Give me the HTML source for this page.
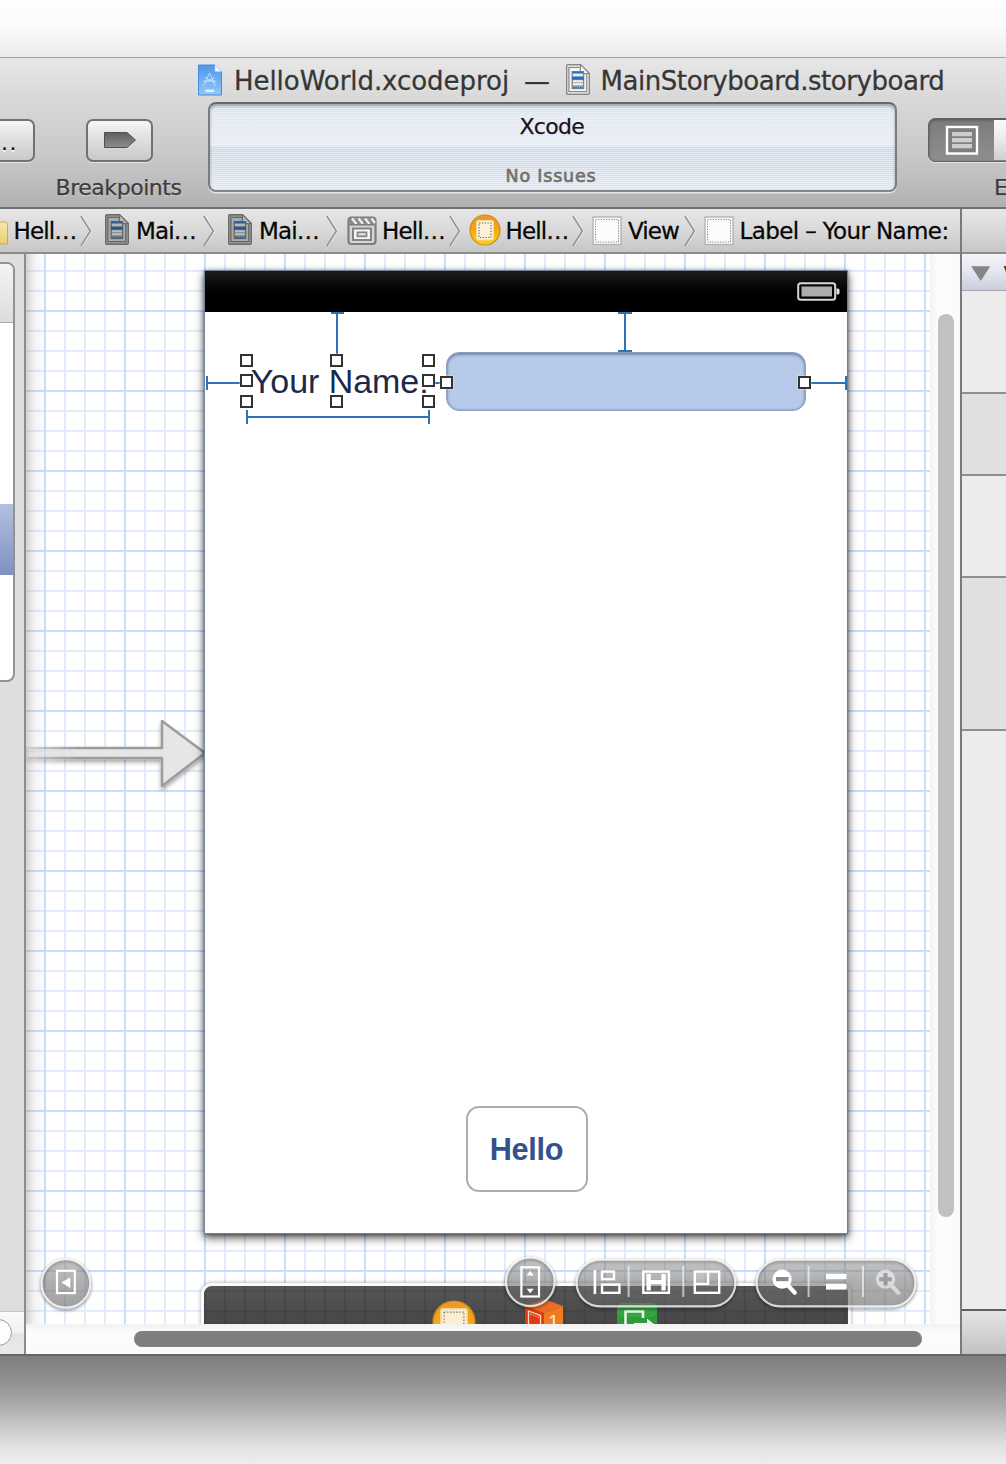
<!DOCTYPE html>
<html>
<head>
<meta charset="utf-8">
<title>Xcode</title>
<style>
html,body{margin:0;padding:0;}
body{width:1006px;height:1464px;position:relative;overflow:hidden;background:#fff;font-family:"DejaVu Sans","Liberation Sans",sans-serif;}
.abs{position:absolute;}
#topbg{left:0;top:0;width:1006px;height:57px;background:linear-gradient(#fefefe 0%,#fbfbfb 45%,#ececec 100%);}
#chrome{left:0;top:57px;width:1006px;height:150px;background:linear-gradient(#e7e7e7 0%,#d8d8d8 28%,#cacaca 62%,#bcbcbc 85%,#b0b0b0 100%);border-top:1px solid #a3a3a3;box-sizing:border-box;}
#chromeline{left:0;top:207px;width:1006px;height:2.500px;background:#707070;}
#crumbs{left:0;top:209px;width:1006px;height:43px;background:linear-gradient(#e6e6e6 0%,#d9d9d9 50%,#c6c6c6 100%);}
#crumbline{left:0;top:252px;width:1006px;height:2px;background:#8c8c8c;}
.tt{position:absolute;white-space:nowrap;line-height:1;}
.title{font-size:26px;color:#363636;-webkit-text-stroke:.3px #363636;text-shadow:0 1px 0 rgba(255,255,255,.6);}
.lbl{font-size:22px;color:#3c3c3c;-webkit-text-stroke:.25px #3c3c3c;text-shadow:0 1px 0 rgba(255,255,255,.55);}
.crumb{letter-spacing:-.9px;font-size:23px;color:#050505;-webkit-text-stroke:.3px #050505;text-shadow:0 1px 0 rgba(255,255,255,.6);}
.tbtn{position:absolute;box-sizing:border-box;border:2px solid #717171;border-radius:7px;background:linear-gradient(#f6f6f6 0%,#e9e9e9 25%,#dadada 60%,#c9c9c9 100%);box-shadow:0 1px 0 rgba(255,255,255,.55);}
#activity{left:208px;top:102px;width:689px;height:90px;box-sizing:border-box;border:2px solid #7c7c7c;border-top-color:#676767;border-bottom-color:#858585;border-radius:8px;background:repeating-linear-gradient(rgba(255,255,255,.38) 0 1px,rgba(255,255,255,0) 1px 2px),linear-gradient(#d6e0ed 0%,#dfe8f3 14%,#e3ebf5 48%,#d0dbea 50%,#d4dfec 75%,#dfe8f4 100%);box-shadow:0 1.500px 0 rgba(255,255,255,.65), inset 0 2px 3px rgba(50,60,80,.4);}
#leftpanel{left:0;top:254px;width:24px;height:1101px;background:#dedede;}
#leftdiv{left:24px;top:254px;width:2px;height:1101px;background:#8c8c8c;}
#canvas{left:26px;top:254px;width:904px;height:1070px;overflow:hidden;background-color:#fff;
background-image:
linear-gradient(90deg,rgba(120,120,120,.32) 0,rgba(160,160,160,.14) 8px,rgba(255,255,255,0) 20px),
linear-gradient(90deg,#c6daf7 0 1px,#cfe0f8 1px 2px,transparent 2px),
linear-gradient(#c6daf7 0 1px,#cfe0f8 1px 2px,transparent 2px),
linear-gradient(90deg,#dde9fa 0 1px,#e6effc 1px 2px,transparent 2px),
linear-gradient(#dde9fa 0 1px,#e6effc 1px 2px,transparent 2px);
background-size:100% 100%,80px 80px,80px 80px,20px 20px,20px 20px;
background-position:0 0,18px 0,0 56px,18px 0,0 16px;
background-repeat:no-repeat,repeat,repeat,repeat,repeat;}
#vtrack{left:930px;top:254px;width:30px;height:1070px;background:linear-gradient(90deg,#f3f3f3,#fdfdfd 30%,#fafafa);}
#vthumb{left:938px;top:314px;width:16px;height:903px;border-radius:8px;background:#c1c1c1;}
#htrack{left:26px;top:1324px;width:934px;height:31px;background:linear-gradient(#f1f1f1,#fdfdfd 30%,#fafafa);}
#hthumb{left:134px;top:1331px;width:788px;height:16px;border-radius:8px;background:#7f7f7f;}
#inspdiv{left:960px;top:209px;width:2px;height:1146px;background:#7a7a7a;}
#insp{left:962px;top:254px;width:44px;height:1101px;background:#ececec;}
#winbottom{left:0;top:1354px;width:1006px;height:2px;background:#666;}
#botshadow{left:0;top:1356px;width:1006px;height:108px;background:linear-gradient(#7e7e7e 0%,#858585 10%,#929292 25%,#aaaaaa 45%,#c8c8c8 65%,#e2e2e2 85%,#eeeeee 100%);}
#view{left:204.300px;top:270.300px;width:643.400px;height:963.300px;background:#fff;box-shadow:0 4px 9px rgba(0,0,0,.62),0 1px 4px rgba(0,0,0,.42);}
#viewborder{left:0;top:0;width:643.400px;height:963.300px;box-sizing:border-box;border:1.700px solid #74829a;border-right-color:#7d7d7d;border-bottom-color:#7d7d7d;}
#statusbar{left:.700px;top:.700px;width:642px;height:41px;background:linear-gradient(#1c1c1c 0,#111 8px,#000 22px,#000 100%);}
.h{position:absolute;width:13px;height:13px;box-sizing:border-box;border:2px solid #333;background:#fff;box-shadow:0 0 0 .5px rgba(255,255,255,.6);}
.bl{position:absolute;background:#2e73b8;}
.pill{position:absolute;box-sizing:border-box;height:50px;border-radius:25px;background:rgba(108,108,108,.56);border:2px solid rgba(255,255,255,.62);box-shadow:0 1px 4px rgba(0,0,0,.35);}
</style>
</head>
<body>
<div id="topbg" class="abs"></div>
<div id="chrome" class="abs"></div>
<div id="chromeline" class="abs"></div>
<div id="crumbs" class="abs"></div>
<div id="crumbline" class="abs"></div>

<!-- TITLE -->
<div id="titlebar">
<span class="tt title" style="left:234px;top:67.500px;letter-spacing:-.05px">HelloWorld.xcodeproj</span>
<span class="tt title" style="left:524px;top:67.500px">—</span>
<span class="tt title" style="left:600.500px;top:67.500px;letter-spacing:-.44px">MainStoryboard.storyboard</span>
</div>

<!-- TOOLBAR -->
<div id="toolbar">
<div class="tbtn" style="left:-10px;top:118.500px;width:45px;height:43px"></div>
<span class="tt" style="left:-7.400px;top:132.200px;font-size:22px;color:#0a0a0a;letter-spacing:1.500px;text-shadow:0 1.500px 0 rgba(255,255,255,.8)">...</span>
<div class="tbtn" style="left:86px;top:118.500px;width:67px;height:43px"></div>
<span class="tt lbl" style="left:55.500px;top:177.200px;letter-spacing:-.45px">Breakpoints</span>
<div id="activity" class="abs"></div>
<span class="tt" style="left:519.500px;top:116px;font-size:22px;color:#1c1020;letter-spacing:-.7px;-webkit-text-stroke:.25px #1c1020">Xcode</span>
<span class="tt" style="left:505.500px;top:168px;font-size:17.500px;color:#717171;letter-spacing:.8px;-webkit-text-stroke:.7px #717171;text-shadow:0 1px 0 rgba(255,255,255,.7)">No Issues</span>
<span class="tt lbl" style="left:994px;top:177.200px">Editor</span>
</div>


<!-- toolbar icons -->
<svg class="abs" style="left:100px;top:128px" width="40" height="24" viewBox="0 0 40 24">
<defs><linearGradient id="bpg" x1="0" y1="0" x2="0" y2="1"><stop offset="0" stop-color="#5f5f5f"/><stop offset="1" stop-color="#8d8d8d"/></linearGradient></defs>
<path d="M4.5 4.5 H27 L35.5 12 L27 19.500 H4.5 Z" fill="url(#bpg)" stroke="#505050" stroke-width="1"/>
</svg>
<div class="abs" style="left:928px;top:118px;width:90px;height:44px;box-sizing:border-box;border:1.5px solid #636363;border-radius:7px;background:linear-gradient(#7b7b7b 0%,#858585 50%,#8f8f8f 100%);box-shadow:0 1px 0 rgba(255,255,255,.5), inset 0 1px 3px rgba(0,0,0,.35);"></div>
<div class="abs" style="left:994px;top:120px;width:20px;height:40px;background:linear-gradient(#fbfbfb 0%,#e9e9e9 50%,#cfcfcf 100%);"></div>
<svg class="abs" style="left:944px;top:124px" width="36" height="32" viewBox="0 0 36 32">
<rect x="3" y="3" width="30" height="26.5" fill="#7e7e7e" stroke="#fff" stroke-width="2.4"/>
<rect x="8" y="8" width="20" height="4.3" fill="#cdcdcd"/>
<rect x="8" y="14" width="20" height="4.3" fill="#cdcdcd"/>
<rect x="8" y="20" width="20" height="4.3" fill="#cdcdcd"/>
</svg>
<!-- title icons -->
<svg class="abs" style="left:197px;top:63.500px" width="26" height="32" viewBox="0 0 26 32">
<defs><linearGradient id="xpg" x1="0" y1="0" x2="0" y2="1"><stop offset="0" stop-color="#4f97ec"/><stop offset="1" stop-color="#93c7f8"/></linearGradient></defs>
<path d="M1.500 1 H18 L24.500 7.500 V31 H1.500 Z" fill="url(#xpg)" stroke="#4a8ade" stroke-width="1"/>
<path d="M18 1 V7.500 H24.500 Z" fill="#fbfdff" stroke="#a9c9ee" stroke-width=".6"/>
<path d="M12.500 9 L6.500 22 M12.500 9 L18.500 22 M6 17 H19.500 M8 13.500 L18 19 M17.500 13.500 L7.500 19" stroke="#d6e8fc" stroke-width="1" fill="none" opacity=".75"/>
<rect x="8.500" y="25.500" width="8.500" height="2.600" fill="#eaf3fe" opacity=".9"/>
</svg>
<svg class="abs" style="left:566px;top:64px" width="24" height="31"><use href="#sbdocw"/></svg>

<!-- BREADCRUMBS -->

<svg width="0" height="0" style="position:absolute">
<defs>
<linearGradient id="fold" x1="0" y1="0" x2="0" y2="1"><stop offset="0" stop-color="#f8e9a8"/><stop offset="1" stop-color="#e9cf6e"/></linearGradient>
<linearGradient id="org" x1="0" y1="0" x2="0" y2="1"><stop offset="0" stop-color="#ee962f"/><stop offset=".45" stop-color="#f4a313"/><stop offset=".72" stop-color="#f8c000"/><stop offset="1" stop-color="#f6cf2a"/></linearGradient>
<symbol id="chev" viewBox="0 0 14 34"><path d="M2 2 L11.500 17 L2 32" fill="none" stroke="#8d8d8d" stroke-width="1.600"/><path d="M3.200 2 L12.700 17 L3.200 32" fill="none" stroke="#f4f4f4" stroke-width="1" opacity=".7"/></symbol>
<symbol id="sbdoc" viewBox="0 0 24 31">
<path d="M2 .7 H14.500 L23.300 9.500 V29 Q23.300 30.300 22 30.300 H2 Q.700 30.300 .700 29 V2 Q.700 .700 2 .700 Z" fill="#9c9c9c" stroke="#6b6b6b" stroke-width="1.400"/>
<path d="M2.900 3.300 H14.500 V9.500 H20.800 V27.600 H2.900 Z" fill="#ababab" stroke="#686868" stroke-width="1.300"/>
<path d="M14.500 .7 V8 Q14.500 9.500 16 9.500 H23.300 Z" fill="#bababa" stroke="#6b6b6b" stroke-width="1.100" stroke-linejoin="round"/>
<rect x="6.100" y="7.500" width="11.600" height="17.100" fill="#8c8c8c" stroke="#5c5c5c" stroke-width="1"/>
<rect x="6.600" y="7.900" width="10.600" height="1.300" fill="#2f5f96"/>
<rect x="7" y="10.100" width="9.800" height="1.800" fill="#bcbcbc"/>
<rect x="5.800" y="12.700" width="12.300" height="3" rx="1.200" fill="#1b5c9d"/>
<rect x="7" y="16.300" width="9.800" height="1.800" fill="#bcbcbc"/>
<rect x="7" y="19.200" width="9.800" height="1.900" fill="#bcbcbc"/>
<path d="M7 23.300 H17" stroke="#2f5f96" stroke-width="1.700" stroke-dasharray="1.600 .700"/>
</symbol>
<symbol id="sbdocw" viewBox="0 0 24 31">
<path d="M2 .7 H14.500 L23.300 9.500 V29 Q23.300 30.300 22 30.300 H2 Q.700 30.300 .700 29 V2 Q.700 .700 2 .700 Z" fill="#fbfbfb" stroke="#868686" stroke-width="1.400"/>
<path d="M2.900 3.300 H14.500 V9.500 H20.800 V27.600 H2.900 Z" fill="#f4f4f4" stroke="#8a8a8a" stroke-width="1.300"/>
<path d="M14.500 .7 V8 Q14.500 9.500 16 9.500 H23.300 Z" fill="#ffffff" stroke="#868686" stroke-width="1.100" stroke-linejoin="round"/>
<rect x="6.100" y="7.500" width="11.600" height="17.100" fill="#b0b0b0" stroke="#7a7a7a" stroke-width="1"/>
<rect x="6.600" y="7.900" width="10.600" height="1.300" fill="#2f6fc0"/>
<rect x="7" y="10.100" width="9.800" height="1.800" fill="#f3f3f3"/>
<rect x="5.800" y="12.700" width="12.300" height="3" rx="1.200" fill="#1a6fd0"/>
<rect x="7" y="16.300" width="9.800" height="1.800" fill="#f3f3f3"/>
<rect x="7" y="19.200" width="9.800" height="1.900" fill="#f3f3f3"/>
<path d="M7 23.300 H17" stroke="#2f6fc0" stroke-width="1.700" stroke-dasharray="1.600 .700"/>
</symbol>
<symbol id="scene" viewBox="0 0 30 30">
<rect x="1.500" y="1.500" width="27" height="26.500" rx="3" fill="#d6d6d6" stroke="#7e7e7e" stroke-width="2.200"/>
<rect x="2.500" y="2.500" width="25" height="5.500" fill="#8a8a8a"/>
<path d="M5 2.500 L9.500 8 M11.500 2.500 L16 8 M18 2.500 L22.500 8 M24.500 2.500 L28 7" stroke="#f0f0f0" stroke-width="2.300"/>
<rect x="2.500" y="8" width="25" height="1.600" fill="#7e7e7e"/>
<rect x="6" y="12.500" width="18" height="11.500" fill="#f4f4f4" stroke="#848484" stroke-width="2"/>
<rect x="10.500" y="16.300" width="9" height="4" fill="#e2e2e2" stroke="#848484" stroke-width="1.700"/>
</symbol>
<symbol id="vc" viewBox="0 0 32 32">
<circle cx="16" cy="16" r="15" fill="url(#org)" stroke="#d18a12" stroke-width="1.200"/>
<rect x="7.500" y="6.500" width="17" height="19.500" rx="2" fill="#fcf0d8" stroke="#f3d9a6" stroke-width="1"/>
<rect x="10" y="9" width="12" height="14.500" fill="none" stroke="#6f6048" stroke-width="1.100" stroke-dasharray="1.300 1.500"/>
</symbol>
<symbol id="vw" viewBox="0 0 30 30">
<rect x="1" y="1" width="28" height="27.500" fill="#fbfbfb" stroke="#b4b4b4" stroke-width="1.400"/>
<rect x="3.500" y="3.500" width="23" height="22.500" fill="none" stroke="#8a8a8a" stroke-width="1" stroke-dasharray="1.300 1.300"/>
</symbol>
</defs>
</svg>
<div id="crumbbar">
<svg class="abs" style="left:-11px;top:218.5px" width="20" height="26" viewBox="0 0 20 26"><path d="M0 3 H16 Q18.500 3 18.500 5.500 V25 H0 Z" fill="url(#fold)" stroke="#c8ac52" stroke-width="1"/></svg>
<svg class="abs" style="left:79px;top:213.5px" width="14" height="34"><use href="#chev"/></svg>
<svg class="abs" style="left:105px;top:214px" width="24" height="31"><use href="#sbdoc"/></svg>
<svg class="abs" style="left:202px;top:213.5px" width="14" height="34"><use href="#chev"/></svg>
<svg class="abs" style="left:228px;top:214px" width="24" height="31"><use href="#sbdoc"/></svg>
<svg class="abs" style="left:325px;top:213.5px" width="14" height="34"><use href="#chev"/></svg>
<svg class="abs" style="left:347px;top:215.5px" width="30" height="30"><use href="#scene"/></svg>
<svg class="abs" style="left:448px;top:213.5px" width="14" height="34"><use href="#chev"/></svg>
<svg class="abs" style="left:469px;top:213.5px" width="32" height="32"><use href="#vc"/></svg>
<svg class="abs" style="left:571px;top:213.5px" width="14" height="34"><use href="#chev"/></svg>
<svg class="abs" style="left:592px;top:215.5px" width="30" height="30"><use href="#vw"/></svg>
<svg class="abs" style="left:683px;top:213.5px" width="14" height="34"><use href="#chev"/></svg>
<svg class="abs" style="left:704px;top:215.5px" width="30" height="30"><use href="#vw"/></svg>

<span class="tt crumb" style="left:13.500px;top:220.200px">Hell…</span>
<span class="tt crumb" style="left:136px;top:220.200px">Mai…</span>
<span class="tt crumb" style="left:259px;top:220.200px">Mai…</span>
<span class="tt crumb" style="left:382px;top:220.200px">Hell…</span>
<span class="tt crumb" style="left:505.500px;top:220.200px">Hell…</span>
<span class="tt crumb" style="left:628px;top:220.200px">View</span>
<span class="tt crumb" style="left:739.500px;top:220.200px;letter-spacing:-.62px">Label – Your Name:</span>
</div>

<div id="leftpanel" class="abs"></div>
<div id="leftdiv" class="abs"></div>
<div id="canvas" class="abs"></div>
<div id="vtrack" class="abs"></div>
<div id="htrack" class="abs"></div>
<div id="insp" class="abs"></div>
<div id="inspdiv" class="abs"></div>


<!-- entry arrow -->
<svg class="abs" style="left:26px;top:707.500px" width="190" height="96" viewBox="0 0 190 96">
<defs>
<linearGradient id="arf" x1="0" y1="0" x2="1" y2="0"><stop offset="0" stop-color="#e6e6e6" stop-opacity=".25"/><stop offset=".12" stop-color="#e6e6e6" stop-opacity=".6"/><stop offset=".3" stop-color="#e6e6e6" stop-opacity="1"/></linearGradient>
<linearGradient id="ars" x1="0" y1="0" x2="1" y2="0"><stop offset="0" stop-color="#9c9c9c" stop-opacity=".25"/><stop offset=".12" stop-color="#9c9c9c" stop-opacity=".6"/><stop offset=".3" stop-color="#9c9c9c" stop-opacity="1"/></linearGradient>
<filter id="ash" x="-10%" y="-20%" width="130%" height="150%"><feGaussianBlur in="SourceAlpha" stdDeviation="2"/><feOffset dy="3"/><feComponentTransfer><feFuncA type="linear" slope=".35"/></feComponentTransfer><feMerge><feMergeNode/><feMergeNode in="SourceGraphic"/></feMerge></filter>
</defs>
<path d="M0 40 H136 V13 L179 45 L136 78 V50 H0 Z" fill="url(#arf)" stroke="url(#ars)" stroke-width="2.500" stroke-linejoin="round" filter="url(#ash)"/>
</svg>
<!-- left panel box -->
<div class="abs" style="left:-20px;top:262px;width:35px;height:420px;box-sizing:border-box;border:2px solid #939393;border-radius:8px;background:#fff;overflow:hidden">
  <div class="abs" style="left:0;top:0;width:40px;height:58px;background:linear-gradient(#f4f4f4,#dcdcdc);border-bottom:1.500px solid #a9a9a9"></div>
  <div class="abs" style="left:0;top:240px;width:40px;height:71px;background:linear-gradient(#b4c0e2,#7e91bf)"></div>
</div>
<div class="abs" style="left:0;top:1311px;width:24px;height:43px;background:linear-gradient(#fbfbfb,#f0f0f0 50%,#e4e4e4 52%,#e9e9e9);border-top:1px solid #c4c4c4;box-sizing:border-box"></div>
<div class="abs" style="left:-15px;top:1319px;width:27px;height:27px;box-sizing:border-box;border-radius:50%;border:1.500px solid #9b9b9b;background:#fdfdfd"></div>
<!-- inspector header -->
<div class="abs" style="left:962px;top:254px;width:44px;height:36px;background:linear-gradient(#f3f3f9 0%,#e6e7f1 45%,#cccddd 100%);border-bottom:1.500px solid #a2a2a8;box-sizing:content-box"></div>
<svg class="abs" style="left:970px;top:264px" width="22" height="18" viewBox="0 0 22 18"><path d="M1.200 2.200 H20.200 L10.700 17 Z" fill="#858585"/></svg>
<span class="tt" style="left:1003.500px;top:263px;font-size:20px;font-weight:bold;color:#5a4020">V</span>
<div class="abs" style="left:962px;top:393px;width:44px;height:82px;background:#e0e0e0"></div>
<div class="abs" style="left:962px;top:577px;width:44px;height:154px;background:#e0e0e0"></div>
<div class="abs" style="left:962px;top:392px;width:44px;height:2px;background:#8f8f8f"></div>
<div class="abs" style="left:962px;top:474px;width:44px;height:2px;background:#8f8f8f"></div>
<div class="abs" style="left:962px;top:576px;width:44px;height:2px;background:#8f8f8f"></div>
<div class="abs" style="left:962px;top:729px;width:44px;height:2px;background:#8f8f8f"></div>
<div class="abs" style="left:962px;top:1309px;width:44px;height:45px;background:linear-gradient(#e4e4e4,#c2c2c2);border-top:2px solid #5e5e5e;box-sizing:border-box"></div>

<!-- IPHONE VIEW -->

<div id="view" class="abs">
  <div id="statusbar" class="abs"></div>
  <div id="viewborder" class="abs"></div>
  <!-- battery -->
  <svg class="abs" style="left:591.500px;top:10.500px" width="46" height="22" viewBox="0 0 46 22">
    <rect x="2.200" y="2.200" width="37" height="16.600" rx="2.500" fill="none" stroke="#d6d6d6" stroke-width="2"/>
    <rect x="5.500" y="5.500" width="30.500" height="10" fill="#adadad"/>
    <path d="M40.500 7.500 H42 Q43.500 7.500 43.500 9 V12 Q43.500 13.500 42 13.500 H40.500 Z" fill="#e4e4e4"/>
  </svg>
  <!-- text field -->
  <div class="abs" style="left:241.500px;top:81.500px;width:360px;height:59px;box-sizing:border-box;border-radius:13px;background:#b7caea;border:1.500px solid #8c9fc3;box-shadow:inset 0 2px 3px rgba(70,85,120,.5),inset 0 0 2.500px rgba(70,85,120,.55);"></div>
  <!-- label -->
  <span class="tt" style="left:46.500px;top:94px;font-family:'Liberation Sans',sans-serif;font-size:34px;color:#1b2a4b;letter-spacing:-.05px">Your Name:</span>
</div>
<!-- guides -->
<div id="guides">
<div class="bl" style="left:336px;top:312px;width:2px;height:44px"></div>
<div class="bl" style="left:331px;top:312px;width:13px;height:2px"></div>
<div class="bl" style="left:624px;top:312px;width:2px;height:40px"></div>
<div class="bl" style="left:618px;top:312px;width:14px;height:2px"></div>
<div class="bl" style="left:618px;top:350px;width:14px;height:2px"></div>
<div class="bl" style="left:206px;top:382px;width:36px;height:2px"></div>
<div class="bl" style="left:206px;top:376px;width:2px;height:14px"></div>
<div class="bl" style="left:811px;top:382px;width:35px;height:2px"></div>
<div class="bl" style="left:845px;top:376px;width:2px;height:14px"></div>
<div class="bl" style="left:434px;top:382px;width:8px;height:2px"></div>
<div class="bl" style="left:247px;top:416px;width:183px;height:2px"></div>
<div class="bl" style="left:246px;top:410px;width:2px;height:14px"></div>
<div class="bl" style="left:428px;top:410px;width:2px;height:14px"></div>
<div class="h" style="left:240px;top:354px"></div>
<div class="h" style="left:330px;top:354px"></div>
<div class="h" style="left:422px;top:354px"></div>
<div class="h" style="left:240px;top:374px"></div>
<div class="h" style="left:422px;top:374px"></div>
<div class="h" style="left:240px;top:395px"></div>
<div class="h" style="left:330px;top:395px"></div>
<div class="h" style="left:422px;top:395px"></div>
<div class="h" style="left:440px;top:376px"></div>
<div class="h" style="left:798px;top:376px"></div>
</div>
<!-- hello button -->
<div class="abs" style="left:466px;top:1106px;width:122px;height:86px;box-sizing:border-box;border:2px solid #adadad;border-radius:13px;background:#fff;"></div>
<span class="tt" style="left:489.800px;top:1135.100px;font-family:'Liberation Sans',sans-serif;font-weight:bold;font-size:30.700px;color:#35518b;letter-spacing:-.35px">Hello</span>


<!-- scene dock -->
<div id="dockwrap" class="abs" style="left:26px;top:254px;width:904px;height:1070px;overflow:hidden;pointer-events:none">
  <div class="abs" style="left:174.800px;top:1028.600px;width:650.700px;height:80px;box-sizing:border-box;border:3.400px solid #fafafa;border-top-width:3px;border-radius:11px 9px 0 0;background-color:#454545;
   background-image:linear-gradient(90deg,rgba(30,40,60,.2) 0 2px,transparent 2px),linear-gradient(rgba(30,40,60,.2) 0 2px,transparent 2px),linear-gradient(#565656,#434343 45px);
   background-size:20px 20px,20px 20px,100% 100%;background-position:-.200px 0,0 4.400px,0 0;box-shadow:0 0 4px rgba(0,0,0,.35)"></div>
  <!-- dock icons -->
  <svg class="abs" style="left:406px;top:1045.600px" width="44" height="44" viewBox="0 0 32 32">
    <circle cx="16" cy="16" r="15.200" fill="url(#org)" stroke="#d08a14" stroke-width="1"/>
    <rect x="6.400" y="6.400" width="19.200" height="22" rx="1.500" fill="#fbeed3" stroke="#f2d49a" stroke-width="1"/>
    <rect x="8.800" y="8.800" width="14.400" height="18" fill="none" stroke="#7d6b4a" stroke-width=".8" stroke-dasharray="1 1.200"/>
  </svg>
  <svg class="abs" style="left:498.700px;top:1045.400px" width="38" height="40" viewBox="0 0 38 40">
    <path d="M19 0 L38 7 L19 14 L0 7 Z" fill="#e85a1a"/>
    <path d="M0 7 L19 14 V40 H0 Z" fill="#e03a10"/>
    <path d="M19 14 L38 7 V40 H19 Z" fill="#f07a22"/>
    <path d="M19 0 L38 7 L19 14 L0 7 Z" fill="#f6a050" opacity=".25"/>
    <path d="M3.500 12 L15.500 16.500 V40 H3.500 Z" fill="none" stroke="#ffd9c6" stroke-width="1.300"/>
    <path d="M5 15 L14 18.400" stroke="#ffd9c6" stroke-width="1" stroke-dasharray="1.400 1.400"/>
    <text x="23" y="30" font-family="Liberation Sans, sans-serif" font-size="20" fill="#ffe2cc">1</text>
  </svg>
  <svg class="abs" style="left:589.500px;top:1047.500px" width="42" height="40" viewBox="0 0 42 40">
    <rect x="1" y="1" width="40" height="40" rx="5" fill="#2c9a38"/>
    <rect x="1" y="1" width="40" height="14" rx="5" fill="#3cae48" opacity=".6"/>
    <path d="M27 16 V9.500 H9.500 V40 M27 28 V40" fill="none" stroke="#e6f7e6" stroke-width="2.600"/>
    <path d="M18 21 H31 V16.500 L39 23 L31 29.500 V25 H18 Z" fill="#e6f7e6"/>
  </svg>
</div>
<!-- overlay controls -->
<svg class="abs" style="left:30px;top:1248px" width="900" height="76" viewBox="0 0 900 76">
<defs>
<filter id="psh" x="-5%" y="-20%" width="110%" height="150%"><feGaussianBlur in="SourceAlpha" stdDeviation="2"/><feOffset dy="1.500"/><feComponentTransfer><feFuncA type="linear" slope=".4"/></feComponentTransfer><feMerge><feMergeNode/><feMergeNode in="SourceGraphic"/></feMerge></filter>
<filter id="pblur" x="-5%" y="-30%" width="110%" height="160%"><feGaussianBlur stdDeviation="1.800"/></filter>
<linearGradient id="pillg" x1="0" y1="0" x2="0" y2="1"><stop offset="0" stop-color="#898989" stop-opacity=".5"/><stop offset=".5" stop-color="#717171" stop-opacity=".575"/><stop offset="1" stop-color="#646464" stop-opacity=".6"/></linearGradient>
</defs>
<!-- coordinates: x-30, y-1248 -->
<g filter="url(#pblur)" fill="none" stroke="#000" stroke-opacity=".38" stroke-width="3">
<circle cx="35.900" cy="36.900" r="24.300"/>
<circle cx="500.300" cy="35.300" r="24.300"/>
<rect x="546.600" y="13.100" width="158.800" height="46.800" rx="23.400"/>
<rect x="726.600" y="13.100" width="158.800" height="46.800" rx="23.400"/>
</g>
<g>
<circle cx="35.900" cy="35.400" r="24.300" fill="url(#pillg)" stroke="#fff" stroke-opacity=".78" stroke-width="2.200"/>
<circle cx="500.300" cy="33.800" r="24.300" fill="url(#pillg)" stroke="#fff" stroke-opacity=".78" stroke-width="2.200"/>
<rect x="546.600" y="11.600" width="158.800" height="46.800" rx="23.400" fill="url(#pillg)" stroke="#fff" stroke-opacity=".78" stroke-width="2.200"/>
<rect x="726.600" y="11.600" width="158.800" height="46.800" rx="23.400" fill="url(#pillg)" stroke="#fff" stroke-opacity=".78" stroke-width="2.200"/>
</g>
<!-- left circle icon -->
<rect x="27" y="22.800" width="17.800" height="22.300" fill="none" stroke="#fff" stroke-width="2.200"/>
<path d="M40.300 29.300 V39.900 L31.400 34.600 Z" fill="#fff"/>
<!-- resize circle icon -->
<rect x="491.400" y="19.300" width="17.600" height="29.200" fill="none" stroke="#fff" stroke-width="2.200"/>
<path d="M500.200 22.800 L503.800 27.400 H496.600 Z" fill="#fff"/>
<path d="M500.200 45.300 L503.800 40.800 H496.600 Z" fill="#fff"/>
<!-- pill 1 icons -->
<rect x="563.600" y="22" width="2.600" height="24" fill="#fff"/>
<rect x="572" y="23.600" width="12" height="7.600" fill="none" stroke="#fff" stroke-width="2.400"/>
<rect x="572" y="36.600" width="17.400" height="8.200" fill="none" stroke="#fff" stroke-width="2.400"/>
<rect x="597.600" y="18" width="2" height="31" fill="#fff" opacity=".6"/>
<rect x="613.300" y="23.600" width="25.600" height="21.200" fill="none" stroke="#fff" stroke-width="2.400"/>
<path d="M616.500 26 H620.800 V32 H631.400 V26 H635.700 V42.400 H631.400 V36.200 H620.800 V42.400 H616.500 Z" fill="#fff"/>
<rect x="652.300" y="18" width="2" height="31" fill="#fff" opacity=".6"/>
<rect x="664.800" y="23.600" width="24.400" height="21.200" fill="none" stroke="#fff" stroke-width="2.400"/>
<path d="M664 35.800 H678.200 V23" fill="none" stroke="#fff" stroke-width="2.200"/>
<rect x="666" y="24.800" width="11" height="10" fill="#fff" opacity=".18"/>
<!-- pill 2 icons -->
<path d="M758 37.500 L764.800 44.700" stroke="#fff" stroke-width="4.200" stroke-linecap="round"/>
<circle cx="752.100" cy="31.200" r="9.600" fill="#fff"/>
<rect x="746" y="29" width="12.400" height="4.200" fill="#8a8a8a"/>
<rect x="777.600" y="18" width="2" height="31" fill="#fff" opacity=".6"/>
<rect x="796" y="25.800" width="20.400" height="5.400" fill="#fff"/>
<rect x="796" y="35.800" width="20.400" height="5.800" fill="#fff"/>
<rect x="832" y="18" width="2" height="31" fill="#fff" opacity=".6"/>
<g opacity=".55">
<path d="M861.500 37.500 L868.300 44.700" stroke="#fff" stroke-width="4.200" stroke-linecap="round"/>
<circle cx="855.500" cy="31.200" r="9.600" fill="#fff"/>
<path d="M849.300 29.200 H853.500 V25 H857.600 V29.200 H861.800 V33.300 H857.600 V37.500 H853.500 V33.300 H849.300 Z" fill="#8d8d8d"/>
</g>
</svg>

<div id="vthumb" class="abs"></div>
<div id="hthumb" class="abs"></div>
<div id="winbottom" class="abs"></div>
<div id="botshadow" class="abs"></div>
</body>
</html>
